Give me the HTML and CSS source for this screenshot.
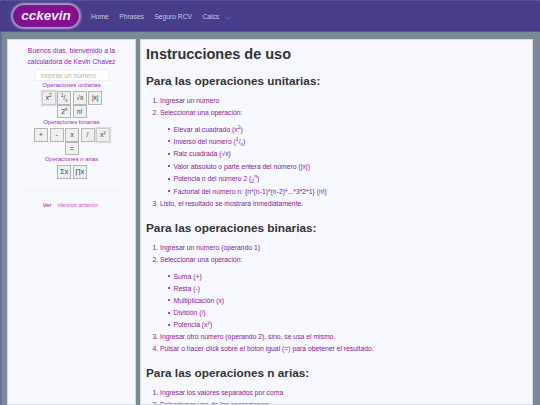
FILE: index.html
```html
<!DOCTYPE html>
<html lang="es">
<head>
<meta charset="utf-8">
<title>cckevin</title>
<link rel="stylesheet" href="styles.css">
</head>
<body>
<header class="navbar">
  <a class="brand">cckevin</a>
  <nav class="nav">
    <a>Home</a><a>Phrases</a><a>Seguro RCV</a>
    <a class="calcs">Calcs<svg class="chev" viewBox="0 0 8 5" width="7" height="4"><path d="M1 1l3 3 3-3" fill="none" stroke="#4f78e0" stroke-width="1.2"/></svg></a>
  </nav>
</header>
<div class="layout">
  <aside class="side">
    <p class="greet">Buenos días, bienvenido a la<br>calculadora de Kevin Chavez</p>
    <input class="num" placeholder="Ingrese un número">
    <div class="op-title">Operaciones unitarias</div>
    <div class="keys">
      <button class="key shade">x<sup>2</sup></button><button class="key"><sup>1</sup>/<sub>x</sub></button><button class="key">√x</button><button class="key">|x|</button>
    </div>
    <div class="keys">
      <button class="key">2<sup>n</sup></button><button class="key">n!</button>
    </div>
    <div class="op-title">Operaciones binarias</div>
    <div class="keys">
      <button class="key">+</button><button class="key">-</button><button class="key">x</button><button class="key">/</button><button class="key shade">x<sup>y</sup></button>
    </div>
    <div class="keys">
      <button class="key">=</button>
    </div>
    <div class="op-title">Operaciones n arias</div>
    <div class="keys">
      <button class="key big">Σx</button><button class="key big">∏x</button>
    </div>
    <hr class="rule">
    <p class="prev"><span>Ver</span><a>Version anterior</a></p>
  </aside>
  <main class="content">
    <h1>Instrucciones de uso</h1>
    <h2>Para las operaciones unitarias:</h2>
    <ol>
      <li>Ingresar un numero</li>
      <li>Seleccionar una operación:
        <ul class="wide">
          <li>Elevar al cuadrado (x<sup>2</sup>)</li>
          <li>Inverso del número (<sup>1</sup>/<sub>x</sub>)</li>
          <li>Raiz cuadrada (√x)</li>
          <li>Valor absoluto o parte entera del número (|x|)</li>
          <li>Potencia n del número 2 (<sub>2</sub><sup>n</sup>)</li>
          <li>Factorial del número n: {n*(n-1)*(n-2)*...*3*2*1} (n!)</li>
        </ul>
      </li>
      <li>Listo, el resultado se mostrará inmediatamente.</li>
    </ol>
    <h2>Para las operaciones binarias:</h2>
    <ol>
      <li>Ingresar un numero (operando 1)</li>
      <li>Seleccionar una operación:
        <ul>
          <li>Suma (+)</li>
          <li>Resta (-)</li>
          <li>Multiplicación (x)</li>
          <li>División (/)</li>
          <li>Potencia (x<sup>y</sup>)</li>
        </ul>
      </li>
      <li>Ingresar otro número (operando 2), sino, se usa el mismo.</li>
      <li>Pulsar o hacer click sobre el boton igual (=) para obetener el resultado.</li>
    </ol>
    <h2>Para las operaciones n arias:</h2>
    <ol>
      <li>Ingresar los valores separados por coma</li>
      <li>Seleccionar una de las operaciones:</li>
    </ol>
  </main>
</div>
</body>
</html>
```
FILE: styles.css
```css
* { box-sizing: border-box; }
body {
  margin: 0;
  height: 405px;
  overflow: hidden;
  background: #7b8a98;
  font-family: "Liberation Sans", Arial, sans-serif;
  font-size: 6.8px;
  color: #851a90;
}
.navbar {
  height: 32px;
  background: #483d8b;
  display: flex;
  align-items: center;
  padding-left: 13px;
  border-top: 1px dotted #6a60a5;
  border-bottom: 1px solid #5a5590;
}
.brand {
  width: 66px;
  height: 22px;
  border-radius: 11px;
  background: #80108c;
  box-shadow: 0 0 2px 2px #a8a2d0;
  color: #f0e8f8;
  font-size: 13.5px;
  font-weight: bold;
  font-style: italic;
  text-align: center;
  line-height: 22px;
}
.nav { display: flex; align-items: center; gap: 10.5px; margin-left: 12px; color: #c5c9e4; font-size: 6.7px; }
.chev { margin-left: 5px; vertical-align: -1px; }
.layout { display: flex; align-items: flex-start; padding: 7px 7px 0 5px; border-left: 2px solid #667098; height: 373px; }
.side {
  width: 129px;
  height: 366px;
  background: #f8f8ff;
  border: 1px solid #d8d8ec;
  padding: 5px 5px 0;
  text-align: center;
}
.greet { margin: 0 0 2px; line-height: 11px; color: #8f1f9f; }
.num {
  display: block;
  width: 74px;
  height: 12px;
  margin: 0 auto;
  padding: 0 5px;
  border: 1px solid #eeecf6;
  background: #fff;
  font: 6.6px "Liberation Sans", sans-serif;
}
.num::placeholder { color: #b5b5b5; }
.op-title { line-height: 9px; margin-bottom: 1px; font-size: 6px; color: #a030b8; }
.keys { display: flex; justify-content: center; gap: 1.5px; padding-left: 1px; }
.key {
  width: 14px;
  height: 13.5px;
  padding: 0;
  border: 1px solid #b5b5b5;
  background: #efefef;
  color: #333;
  font: 6.5px "Liberation Sans", sans-serif;
}
.key sup, .key sub { font-size: 4.5px; line-height: 0; }
.shade { border: 1px solid #ccc; box-shadow: 0 0 1px 1px #ddd; }
.big { font-size: 7px; }
.rule { border: 0; border-top: 1px solid #f0eef6; margin: 11px 8px 0; }
.prev { margin: 11px 0 0; font-size: 5.8px; padding-right: 2px; }
.prev span { margin-right: 6px; }
.prev a { color: #e040d0; font-style: italic; }
.content {
  width: 393px;
  height: 366px;
  margin-left: 4px;
  background: #f8f8ff;
  border: 1px solid #d8d8ec;
  padding: 6px 5px 0;
  overflow: hidden;
}
h1 { margin: 0 0 11px; font-size: 14.5px; line-height: 17px; color: #333; }
h2 { margin: 0 0 5.5px; font-size: 11.8px; line-height: 15px; color: #333; }
ol { margin: 0 0 11px; padding-left: 14px; }
li { line-height: 12px; }
ul { list-style: none; margin: 5px 0 0; padding-left: 13.5px; }
ul li { line-height: 12.1px; }
ul.wide li { line-height: 12.45px; }
ul li::before {
  content: "";
  display: inline-block;
  width: 2px;
  height: 2px;
  border-radius: 50%;
  background: #851a90;
  margin: 0 3.5px 1.5px -5.5px;
}
li sup, li sub { font-size: 5px; line-height: 1; }
```
